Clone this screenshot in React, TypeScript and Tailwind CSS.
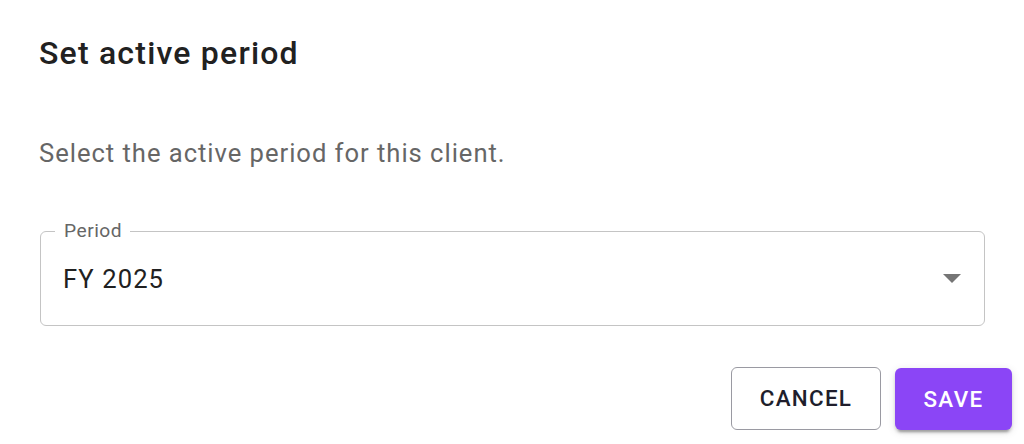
import React from "react";

export default function App() {
  return (
    <div className="w-[1024px] h-[444px] bg-white flex flex-col font-['Roboto',_'Liberation_Sans',_sans-serif] overflow-hidden">
      <h2 className="pt-[28px] pl-[39px] text-[32px] leading-[51px] font-medium tracking-[1.2px] text-[#212121]">
        Set active period
      </h2>
      <p className="mt-[55px] pl-[39px] text-[25.6px] leading-[38.4px] tracking-[0.97px] text-[#666666]">
        Select the active period for this client.
      </p>
      <div className="mt-[59px] ml-[40px] mr-[39px] relative h-[95px] border border-[#c4c4c4] rounded-[6px] flex items-center">
        <span className="absolute left-[14px] top-[-11px] pl-[9px] pr-[8px] bg-white text-[19.2px] leading-none tracking-[0.5px] text-[#666666]">
          Period
        </span>
        <span className="pl-[22px] flex-1 text-[25.6px] leading-[30px] tracking-[1.1px] text-[#212121]">
          FY 2025
        </span>
        <svg width="18" height="9" viewBox="0 0 18 9" className="mr-[23px] mt-[-1px]">
          <polygon points="0,0 18,0 9,9" fill="#757575" />
        </svg>
      </div>
      <div className="mt-[41px] pr-[12px] flex justify-end gap-[14px]">
        <button className="w-[150px] h-[63px] border border-[#9a9aa2] rounded-[6px] bg-white flex items-center justify-center text-[22.4px] font-medium tracking-[1.3px] text-[#201e2c]">
          CANCEL
        </button>
        <button className="w-[117px] h-[62px] mt-[1px] rounded-[6px] bg-[#8b45f6] flex items-center justify-center text-[22.4px] font-medium tracking-[1.4px] text-white shadow-[0_5px_2px_-3px_rgba(0,0,0,0.2),0_3px_3px_0_rgba(0,0,0,0.14),0_2px_8px_0_rgba(0,0,0,0.12)]">
          SAVE
        </button>
      </div>
    </div>
  );
}
